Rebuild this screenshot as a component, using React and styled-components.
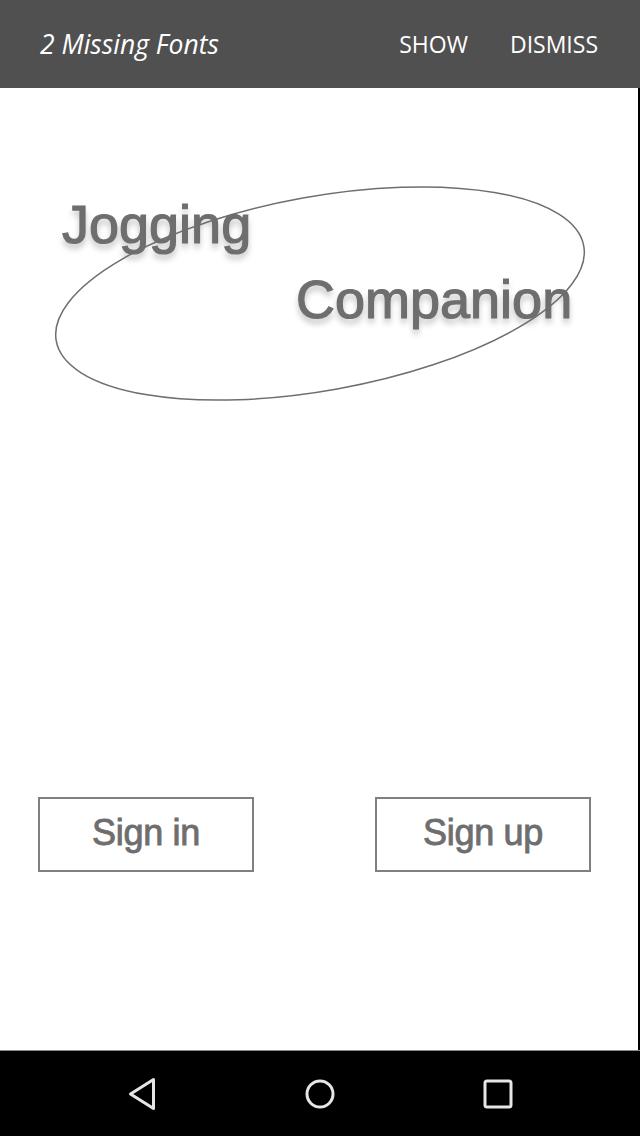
import React from "react";
import styled, { createGlobalStyle } from "styled-components";

const GlobalStyle = createGlobalStyle`
  html, body {
    margin: 0;
    padding: 0;
    background: #ffffff;
  }
  body {
    font-family: "Liberation Sans", Arial, sans-serif;
  }
`;

const Screen = styled.div`
  display: flex;
  flex-direction: column;
  width: 640px;
  height: 1136px;
  overflow: hidden;
`;

const Snackbar = styled.div`
  display: flex;
  align-items: center;
  justify-content: space-between;
  height: 88px;
  padding: 0 42px 0 40px;
  box-sizing: border-box;
  background-color: #505050;
  color: #ffffff;
  font-family: "Open Sans", "Noto Sans", sans-serif;
`;

const Notice = styled.div`
  font-size: 26.5px;
  font-style: italic;
`;

const Actions = styled.div`
  display: flex;
  gap: 42px;
`;

const Action = styled.div`
  font-size: 23px;
`;

const Content = styled.div`
  flex: 1;
  display: flex;
  flex-direction: column;
  background: #ffffff;
  border-right: 2px solid #000000;
`;

const Logo = styled.div`
  position: relative;
  display: flex;
  flex-direction: column;
  width: 530px;
  height: 212px;
  margin: 99px 0 0 55px;
  padding-top: 10px;
  box-sizing: border-box;
`;

const Word = styled.div`
  margin-left: ${(p) => p.$indent}px;
  margin-bottom: 21px;
  font-size: 54px;
  line-height: 54px;
  color: #6e6e6e;
  -webkit-text-stroke: 1.2px #6e6e6e;
  text-shadow: 0 5px 6px rgba(0, 0, 0, 0.28);
`;

const Ring = styled.svg`
  position: absolute;
  inset: 0;
  overflow: visible;
  pointer-events: none;
`;

const ButtonRow = styled.div`
  display: flex;
  justify-content: space-between;
  margin-top: 398px;
  padding: 0 47px 0 38px;
`;

const Button = styled.div`
  display: flex;
  align-items: center;
  justify-content: center;
  width: 216px;
  height: 75px;
  padding-bottom: 3px;
  box-sizing: border-box;
  border: 2px solid #808080;
  color: #6e6e6e;
  font-size: 36px;
  letter-spacing: -0.3px;
  -webkit-text-stroke: 0.9px #6e6e6e;
`;

const NavBar = styled.div`
  display: flex;
  align-items: center;
  justify-content: center;
  gap: 138px;
  height: 86px;
  box-sizing: border-box;
  background: #000000;
  border-top: 1px solid #8a8a8a;
`;

const NavIcon = styled.svg`
  width: 40px;
  height: 40px;
  fill: none;
  stroke: #e6e6e6;
  stroke-width: 3;
  stroke-linejoin: round;
`;

export default function App() {
  return (
    <Screen>
      <GlobalStyle />
      <Snackbar>
        <Notice>2 Missing Fonts</Notice>
        <Actions>
          <Action>SHOW</Action>
          <Action>DISMISS</Action>
        </Actions>
      </Snackbar>
      <Content>
        <Logo>
          <Word $indent={7}>Jogging</Word>
          <Word $indent={241}>Companion</Word>
          <Ring viewBox="0 0 530 212" width="530" height="212">
            <ellipse
              cx="265"
              cy="106.5"
              rx="268"
              ry="97"
              transform="rotate(-10.2 265 106.5)"
              fill="none"
              stroke="#6e6e6e"
              strokeWidth="1.5"
            />
          </Ring>
        </Logo>
        <ButtonRow>
          <Button>Sign in</Button>
          <Button>Sign up</Button>
        </ButtonRow>
      </Content>
      <NavBar>
        <NavIcon viewBox="0 0 40 40">
          <path d="M8.5 20 L31.5 5.5 L31.5 34.5 Z" />
        </NavIcon>
        <NavIcon viewBox="0 0 40 40">
          <circle cx="20" cy="20" r="13" />
        </NavIcon>
        <NavIcon viewBox="0 0 40 40">
          <rect x="7" y="7" width="26" height="26" rx="2" />
        </NavIcon>
      </NavBar>
    </Screen>
  );
}
